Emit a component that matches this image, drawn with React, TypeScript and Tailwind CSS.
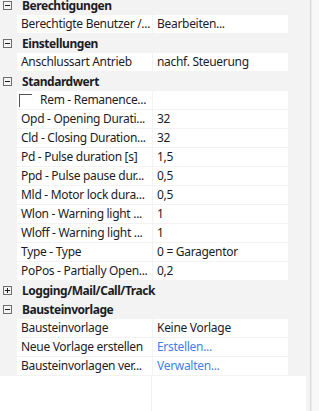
import React from "react";

type Row =
  | { kind: "header"; label: string; open: boolean }
  | { kind: "prop"; name: string; value: string; link?: boolean; checkbox?: boolean };

const rows: Row[] = [
  { kind: "header", label: "Berechtigungen", open: true },
  { kind: "prop", name: "Berechtigte Benutzer /...", value: "Bearbeiten..." },
  { kind: "header", label: "Einstellungen", open: true },
  { kind: "prop", name: "Anschlussart Antrieb", value: "nachf. Steuerung" },
  { kind: "header", label: "Standardwert", open: true },
  { kind: "prop", name: "Rem - Remanence...", value: "", checkbox: true },
  { kind: "prop", name: "Opd - Opening Durati...", value: "32" },
  { kind: "prop", name: "Cld - Closing Duration...", value: "32" },
  { kind: "prop", name: "Pd - Pulse duration [s]", value: "1,5" },
  { kind: "prop", name: "Ppd - Pulse pause dur...", value: "0,5" },
  { kind: "prop", name: "Mld - Motor lock dura...", value: "0,5" },
  { kind: "prop", name: "Wlon - Warning light ...", value: "1" },
  { kind: "prop", name: "Wloff - Warning light ...", value: "1" },
  { kind: "prop", name: "Type - Type", value: "0 = Garagentor" },
  { kind: "prop", name: "PoPos - Partially Open...", value: "0,2" },
  { kind: "header", label: "Logging/Mail/Call/Track", open: false },
  { kind: "header", label: "Bausteinvorlage", open: true },
  { kind: "prop", name: "Bausteinvorlage", value: "Keine Vorlage" },
  { kind: "prop", name: "Neue Vorlage erstellen", value: "Erstellen...", link: true },
  { kind: "prop", name: "Bausteinvorlagen ver...", value: "Verwalten...", link: true },
];

function ToggleBox({ open }: { open: boolean }) {
  return (
    <svg width="9" height="9" viewBox="0 0 9 9" className="shrink-0">
      <rect x="0.5" y="0.5" width="8" height="8" fill="none" stroke="#6e6e6e" />
      <line x1="2" y1="4.5" x2="7" y2="4.5" stroke="#1e1e1e" />
      {!open && <line x1="4.5" y1="2" x2="4.5" y2="7" stroke="#1e1e1e" />}
    </svg>
  );
}

export default function App() {
  return (
    <div
      className="flex w-[319px] h-[411px] overflow-hidden text-[12px] text-[#1c1c26] tracking-[-0.3px]"
      style={{ fontFamily: '"Noto Sans", "Open Sans", sans-serif' }}
    >
      <div className="w-[310px] bg-[#f3f3f3] flex flex-col">
        <div className="-mt-[4px] flex flex-col">
          {rows.map((r, i) =>
            r.kind === "header" ? (
              <div key={i} className="h-[19px] flex items-center pl-[3px]">
                <ToggleBox open={r.open} />
                <span className="ml-[10px] font-bold leading-[18px] whitespace-nowrap tracking-[-0.45px]">
                  {r.label}
                </span>
              </div>
            ) : (
              <div key={i} className="h-[19px] flex pl-[17px] gap-px">
                <div className="w-[135px] h-[18px] bg-white flex items-center overflow-hidden whitespace-nowrap">
                  {r.checkbox ? (
                    <>
                      <span className="ml-[2px] w-[13px] h-[13px] border-t border-l border-[#555] shrink-0" />
                      <span className="ml-[8px] leading-[18px]">{r.name}</span>
                    </>
                  ) : (
                    <span className="pl-[4px] leading-[18px]">{r.name}</span>
                  )}
                </div>
                <div
                  className={`w-[135px] h-[18px] bg-white flex items-center overflow-hidden whitespace-nowrap pl-[4px] leading-[18px] ${
                    r.link ? "text-[#3f7fee]" : ""
                  }`}
                >
                  {r.value}
                </div>
              </div>
            )
          )}
        </div>
        <div className="flex-1 w-[306px] bg-white flex">
          <div className="w-[152px] border-r border-[#f0f0f0]" />
        </div>
      </div>
      <div className="w-px bg-[#dadada]" />
      <div className="w-px bg-[#ececec]" />
      <div className="flex-1 bg-[#f8f8f8]" />
    </div>
  );
}
